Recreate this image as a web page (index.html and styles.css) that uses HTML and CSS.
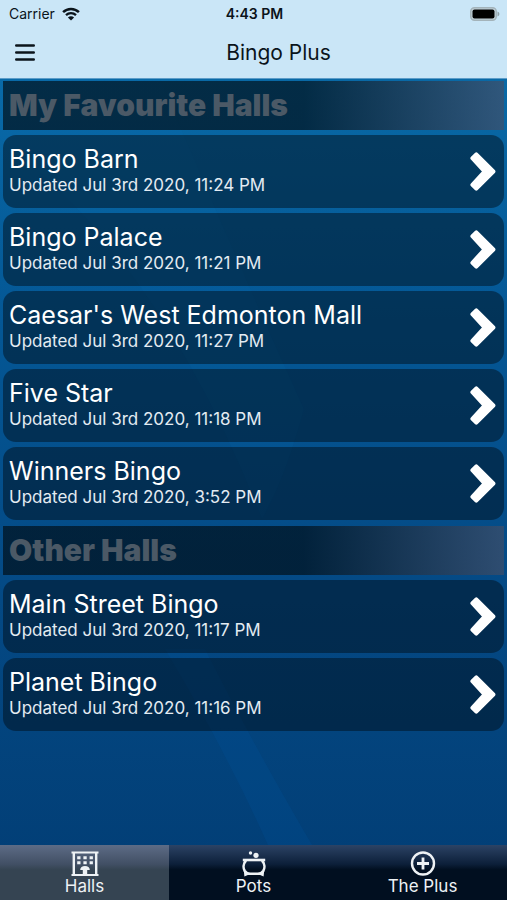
FILE: index.html
```html
<!DOCTYPE html>
<html lang="en">
<head>
<meta charset="utf-8">
<meta name="viewport" content="width=device-width, initial-scale=1">
<title>Bingo Plus</title>
<link rel="stylesheet" href="styles.css">
</head>
<body>
<svg class="defs" aria-hidden="true">
  <symbol id="chevron" viewBox="0 0 26 39">
    <path d="M6.300 2.400 23.400 19.500 6.300 36.600 2.400 32.800 14.500 19.500 2.400 6.200z" stroke="#fff" stroke-width="4" stroke-linejoin="round"/>
  </symbol>
</svg>
<div class="app">
  <header class="top">
    <div class="status">
      <div class="carrier">
        <span>Carrier</span>
        <svg class="wifi" viewBox="0 0 18 14" aria-hidden="true">
          <path d="M1.1 5.2C5.5.9 12.500.9 16.900 5.200" fill="none" stroke="currentColor" stroke-width="2.500"/>
          <path d="M4 8.200c2.800-2.700 7.200-2.700 10 0" fill="none" stroke="currentColor" stroke-width="2.300"/>
          <path d="M9 13.600 5.900 10.500c1.800-1.600 4.400-1.600 6.200 0z" fill="currentColor"/>
        </svg>
      </div>
      <span class="clock">4:43 PM</span>
      <svg class="battery" viewBox="0 0 30 14" aria-hidden="true">
        <rect x=".75" y=".75" width="25.500" height="12.500" rx="3.800" fill="#c3d3da" stroke="#a3b3ba" stroke-width="1.500"/>
        <rect x="2.500" y="2.500" width="22" height="9" rx="2" fill="#000"/>
        <path d="M27.500 4.500c2.500.8 2.500 4.200 0 5z" fill="#8fa0a8"/>
      </svg>
    </div>
    <div class="navbar">
      <button class="menu" type="button" aria-label="Menu">
        <svg viewBox="0 0 20 17" aria-hidden="true"><path d="M1.200 1.500h17.600M1.200 8.500h17.600M1.200 15.500h17.600" stroke="currentColor" stroke-width="2.400" stroke-linecap="round"/></svg>
      </button>
      <h1>Bingo Plus</h1>
    </div>
  </header>

  <main class="content">
    <svg class="rays" viewBox="0 0 507 766" preserveAspectRatio="none" aria-hidden="true">
      <path d="M0 0H160Q240 190 304 330Q285 400 262 440Q160 180 0 60Z" fill="#1080c0" opacity=".07"/>
      <path d="M165 570 205 570Q250 660 312 766H268Q225 670 165 570Z" fill="#0058a8" opacity=".18"/>
    </svg>
    <section class="group">
      <h2>My Favourite Halls</h2>
      <a class="hall" href="#"><span class="info"><span class="name">Bingo Barn</span><span class="updated">Updated Jul 3rd 2020, 11:24 PM</span></span><svg class="chevron" aria-hidden="true"><use href="#chevron"/></svg></a>
      <a class="hall" href="#"><span class="info"><span class="name">Bingo Palace</span><span class="updated">Updated Jul 3rd 2020, 11:21 PM</span></span><svg class="chevron" aria-hidden="true"><use href="#chevron"/></svg></a>
      <a class="hall" href="#"><span class="info"><span class="name">Caesar's West Edmonton Mall</span><span class="updated">Updated Jul 3rd 2020, 11:27 PM</span></span><svg class="chevron" aria-hidden="true"><use href="#chevron"/></svg></a>
      <a class="hall" href="#"><span class="info"><span class="name">Five Star</span><span class="updated">Updated Jul 3rd 2020, 11:18 PM</span></span><svg class="chevron" aria-hidden="true"><use href="#chevron"/></svg></a>
      <a class="hall" href="#"><span class="info"><span class="name">Winners Bingo</span><span class="updated">Updated Jul 3rd 2020, 3:52 PM</span></span><svg class="chevron" aria-hidden="true"><use href="#chevron"/></svg></a>
    </section>
    <section class="group">
      <h2>Other Halls</h2>
      <a class="hall" href="#"><span class="info"><span class="name">Main Street Bingo</span><span class="updated">Updated Jul 3rd 2020, 11:17 PM</span></span><svg class="chevron" aria-hidden="true"><use href="#chevron"/></svg></a>
      <a class="hall" href="#"><span class="info"><span class="name">Planet Bingo</span><span class="updated">Updated Jul 3rd 2020, 11:16 PM</span></span><svg class="chevron" aria-hidden="true"><use href="#chevron"/></svg></a>
    </section>
  </main>

  <nav class="tabs">
    <a class="tab active" href="#" aria-current="page">
      <svg viewBox="0 0 28 26" aria-hidden="true">
        <path d="M.5 1.500h27M.5 24h27" stroke="currentColor" stroke-width="2.200"/>
        <path d="M2.800 1.500V24M25.200 1.500V24" stroke="currentColor" stroke-width="2.400"/>
        <path d="M6.200 5.200h3.300v3H6.200zM12.400 5.200h3.300v3h-3.300zM18.600 5.200h3.300v3h-3.300zM6.200 10.200h3.300v3H6.200zM12.400 10.200h3.300v3h-3.300zM18.600 10.200h3.300v3h-3.300z" fill="currentColor"/>
        <path d="M9.200 19c0-2.400 2-4 4.800-4s4.800 1.600 4.800 4h-2.600v5h-4.400v-5z" fill="currentColor"/>
      </svg>
      <span>Halls</span>
    </a>
    <a class="tab" href="#">
      <svg viewBox="0 0 28 26" aria-hidden="true">
        <circle cx="10.500" cy="2" r="1.700" fill="currentColor"/>
        <circle cx="16" cy="4.300" r="2.600" fill="currentColor"/>
        <path d="M2.800 9h22.400" stroke="currentColor" stroke-width="2.600"/>
        <path d="M6 9.500C3.200 12.500 3 17 4.800 20c1.400 2.200 3.200 2.800 5.400 2.800h7.600c2.200 0 4-.6 5.400-2.800 1.800-3 1.600-7.500-1.200-10.500" fill="none" stroke="currentColor" stroke-width="2.600"/>
        <path d="M3.800 19.500 9 23.500l-4.600 2zM24.200 19.500 19 23.500l4.600 2z" fill="currentColor"/>
      </svg>
      <span>Pots</span>
    </a>
    <a class="tab" href="#">
      <svg viewBox="0 0 28 26" aria-hidden="true">
        <circle cx="14" cy="12.500" r="11" fill="none" stroke="currentColor" stroke-width="2.400"/>
        <path d="M14 6.500v12M8 12.500h12" stroke="currentColor" stroke-width="2.800"/>
      </svg>
      <span>The Plus</span>
    </a>
  </nav>
</div>
</body>
</html>
```
FILE: styles.css
```css
* {
  box-sizing: border-box;
}

body {
  margin: 0;
  font-family: Inter, "Liberation Sans", sans-serif;
  color: #fff;
}

a {
  color: inherit;
  text-decoration: none;
}

.defs {
  display: none;
}

.app {
  display: flex;
  flex-direction: column;
  min-height: 100vh;
  background: linear-gradient(#0969a6 80px, #045795 320px, #044984 600px, #023f77 850px);
}

.top {
  background: #cae6f7;
  color: #0b141b;
  border-bottom: 1px solid #5c9cc8;
}

.status {
  display: grid;
  grid-template-columns: 1fr auto 1fr;
  align-items: center;
  height: 27px;
  padding: 0 7px 0 9px;
  font-size: 14px;
}

.carrier {
  display: flex;
  align-items: center;
  gap: 7px;
}

.wifi {
  width: 18px;
  height: 14px;
}

.clock {
  font-weight: 600;
}

.battery {
  justify-self: end;
  width: 30px;
  height: 14px;
}

.navbar {
  display: flex;
  align-items: center;
  height: 51px;
}

.menu {
  flex: none;
  width: 50px;
  height: 50px;
  padding: 0 15px;
  border: 0;
  background: none;
  color: inherit;
}

.menu svg {
  display: block;
  width: 20px;
  height: 17px;
}

h1 {
  flex: 1;
  margin: 0;
  font-size: 21px;
  font-weight: 400;
  text-align: center;
}

.content {
  position: relative;
  flex: 1;
  display: flex;
  flex-direction: column;
  gap: 6px;
  padding: 2px 3px 5px;
}

.rays {
  position: absolute;
  inset: 0;
  width: 100%;
  height: 100%;
}

.group {
  position: relative;
  display: flex;
  flex-direction: column;
  gap: 5px;
}

h2 {
  margin: 0;
  padding: 0 6px;
  background: linear-gradient(90deg, rgba(0, 12, 20, 0.66) 60%, rgba(68, 78, 102, 0.66));
  color: #4b5966;
  font-size: 30px;
  font-weight: 900;
  line-height: 49px;
}

.hall {
  display: flex;
  align-items: center;
  justify-content: space-between;
  height: 73px;
  padding: 0 8px 0 6px;
  border-radius: 13px;
  background: rgba(0, 12, 22, 0.48);
}

.info {
  display: flex;
  flex-direction: column;
  padding-bottom: 4px;
}

.name {
  font-size: 25px;
  line-height: 30px;
}

.updated {
  color: #e3ebf2;
  font-size: 17px;
  line-height: 22px;
}

.chevron {
  flex: none;
  width: 26px;
  height: 39px;
  fill: #fff;
}

.tabs {
  display: grid;
  grid-template-columns: repeat(3, 1fr);
  height: 55px;
  background: linear-gradient(#2c4365, #0c1f39 35%, #010f20 45%, #010f20);
}

.tab {
  display: flex;
  flex-direction: column;
  align-items: center;
  padding-top: 6px;
  font-size: 17px;
  line-height: 19px;
  color: #eef2f5;
}

.tab.active {
  background: linear-gradient(#5d6c86, #414f64 35%, #354452 45%, #354452);
}

.tab svg {
  flex: none;
  width: 28px;
  height: 26px;
}
```
